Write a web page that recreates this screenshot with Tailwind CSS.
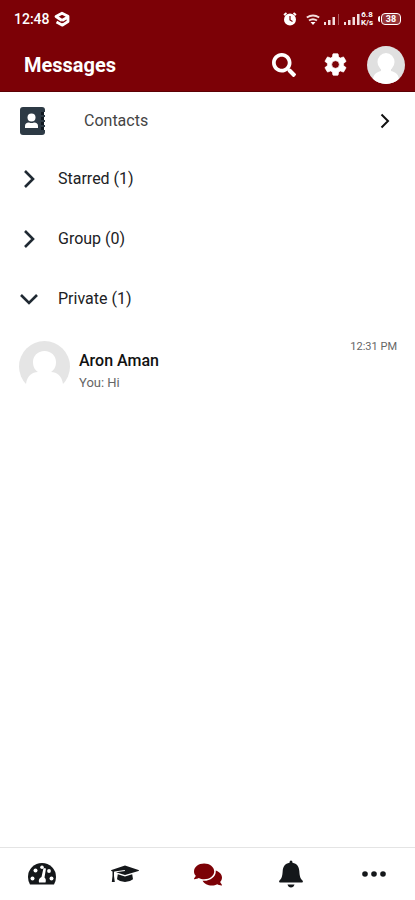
<!DOCTYPE html>
<html lang="en">
<head>
<meta charset="utf-8">
<meta name="viewport" content="width=device-width, initial-scale=1">
<title>Messages</title>
<script src="https://cdn.jsdelivr.net/npm/@tailwindcss/browser@4"></script>
</head>
<body class="flex min-h-screen flex-col bg-white font-[Roboto,sans-serif] text-[#202124]">
<header class="border-b border-[#5c0004] bg-[#7c0106] text-white">
  <div class="flex h-[38px] items-center justify-between pl-3.5 pr-3.5">
    <div class="flex items-center gap-1">
      <span class="text-sm font-medium">12:48</span>
      <svg class="size-4" viewBox="0 0 16 16" fill="none" stroke="currentColor" stroke-width="2.800" stroke-linejoin="round"><path d="M8 9.500 2 5.500 8 2.200l6 3v5.300l-5.500 3.700L2.500 11M8 9.500l5-3"/></svg>
    </div>
    <div class="flex items-center gap-1">
      <svg class="mr-1 size-4" viewBox="0 0 16 16"><circle cx="8" cy="8.500" r="6" fill="#fff"/><path d="M2 4 4.500 2M14 4 11.500 2" stroke="#fff" stroke-width="1.800"/><path d="M8 5v4l2.500 1.500" fill="none" stroke="#7c0106" stroke-width="1.200"/></svg>
      <svg class="h-4 w-3.5" viewBox="0 0 14 16" fill="none" stroke="#f3dddd" stroke-width="2"><path d="M.8 6.500Q7 2.500 13.200 6.500M3 9.500q4-2.700 8 0"/><path d="M4.500 11h5L7 14z" fill="#fff" stroke="none"/></svg>
      <svg class="h-4 w-4" viewBox="0 0 16 16" fill="#f3dddd"><path d="M0 11h2v3H0zM4 9h2.500v5H4zM8.500 6H11v8H8.500z"/><path d="M14 3h1v11h-1z" opacity=".4"/></svg>
      <svg class="h-4 w-4" viewBox="0 0 16 16" fill="#f3dddd"><path d="M0 11h2v3H0zM4 9h2.500v5H4zM8.500 6H11v8H8.500zM13 3h2.500v11H13z"/></svg>
      <span class="-ml-1 flex w-3.5 flex-col text-center text-[8px] font-bold leading-[8px]"><span>6.8</span><span>K/s</span></span>
      <span class="flex items-center"><span class="mr-px h-1.5 w-0.5 rounded-l bg-white"></span><span class="flex h-3 w-5 items-center justify-center rounded border border-white bg-white/20 text-[9px] font-bold leading-none">38</span></span>
    </div>
  </div>
  <div class="flex h-[53px] items-center pl-6 pr-2.5">
    <h1 class="flex-1 text-xl font-bold">Messages</h1>
    <button aria-label="Search" class="mr-[26px]"><svg class="size-6" viewBox="0 0 512 512" fill="currentColor"><path d="M505 442.700L405.300 343c-4.500-4.500-10.600-7-17-7H372c27.600-35.300 44-79.700 44-128C416 93.100 322.900 0 208 0S0 93.100 0 208s93.100 208 208 208c48.300 0 92.700-16.400 128-44v16.300c0 6.400 2.500 12.500 7 17l99.700 99.700c9.400 9.400 24.600 9.400 33.900 0l28.300-28.300c9.400-9.400 9.400-24.600.1-34zM208 336c-70.700 0-128-57.200-128-128 0-70.700 57.200-128 128-128 70.700 0 128 57.200 128 128 0 70.700-57.200 128-128 128z"/></svg></button>
    <button aria-label="Settings" class="mr-[18px]"><svg class="size-[27px]" viewBox="0 0 24 24" fill="currentColor" stroke="currentColor" stroke-width=".6"><path d="M19.140 12.940c.04-.3.060-.61.060-.94 0-.32-.02-.64-.07-.94l2.030-1.580c.18-.14.23-.41.12-.61l-1.920-3.320c-.12-.22-.37-.29-.59-.22l-2.390.96c-.5-.38-1.030-.7-1.620-.94l-.36-2.540c-.04-.24-.24-.41-.48-.41h-3.840c-.24 0-.43.17-.47.41l-.36 2.540c-.59.24-1.130.57-1.620.94l-2.390-.96c-.22-.08-.47 0-.59.22L2.740 8.870c-.12.21-.08.47.12.61l2.030 1.580c-.05.3-.09.63-.09.94s.02.64.07.94l-2.030 1.580c-.18.14-.23.41-.12.61l1.920 3.320c.12.22.37.29.59.22l2.390-.96c.5.38 1.030.7 1.620.94l.36 2.540c.05.24.24.41.48.41h3.840c.24 0 .44-.17.47-.41l.36-2.540c.59-.24 1.130-.56 1.620-.94l2.390.96c.22.08.47 0 .59-.22l1.920-3.320c.12-.22.07-.47-.12-.61l-2.010-1.580zM12 15.400a3.400 3.400 0 1 1 0-6.800 3.400 3.400 0 0 1 0 6.800z"/></svg></button>
    <button aria-label="Profile" class="size-[38px] overflow-hidden rounded-full bg-[#e0e0e0]"><svg class="size-full" viewBox="0 0 38 38" fill="#fff"><ellipse cx="19" cy="16" rx="8.500" ry="9"/><path d="M14 21h10v4c5 1 8 4 8 9a19 19 0 0 1-26 0c0-5 3-8 8-9z"/></svg></button>
  </div>
</header>
<main class="flex-1 pt-px">
  <a href="#contacts" class="flex h-14 items-center pl-5 pr-[25px]">
    <svg class="h-7 w-[26px]" viewBox="0 0 26 28"><path fill="#2d3a45" d="M3 0h19q3 0 3 3v22q0 3-3 3H3q-3 0-3-3V3Q0 0 3 0z"/><path fill="#fff" d="M26 5h-2v3h2zM26 10h-2v3h2zM26 15h-2v3h2zM26 20h-2v3h2z"/><path fill="#111a22" d="M21 5h3v3h-3zM21 10h3v3h-3zM21 15h3v3h-3zM21 20h3v3h-3z"/><circle cx="11.500" cy="10.500" r="4" fill="#fff"/><path fill="#fff" d="M5 21v-2q0-3.500 4-3.500 2.500 1.200 5 0 4 0 4 3.500v2z"/></svg>
    <span class="ml-[38px] flex-1 text-base text-[#444]">Contacts</span>
    <svg class="h-4 w-2.5" viewBox="0 0 10 16" fill="none" stroke="#111" stroke-width="2"><path d="m1.500 1.500 6.500 6.500-6.500 6.500"/></svg>
  </a>
  <button class="flex h-[60px] w-full items-center pl-5 text-left">
    <svg class="mr-5 size-[18px]" viewBox="0 0 18 18" fill="none" stroke="#202a33" stroke-width="2.600"><path d="m5 1 8 8-8 8"/></svg>
    <span>Starred (1)</span>
  </button>
  <button class="flex h-[60px] w-full items-center pl-5 text-left">
    <svg class="mr-5 size-[18px]" viewBox="0 0 18 18" fill="none" stroke="#202a33" stroke-width="2.600"><path d="m5 1 8 8-8 8"/></svg>
    <span>Group (0)</span>
  </button>
  <button aria-expanded="true" class="flex h-[60px] w-full items-center pl-5 text-left">
    <svg class="mr-5 size-[18px]" viewBox="0 0 18 18" fill="none" stroke="#202a33" stroke-width="2.600"><path d="m1 5 8 8 8-8"/></svg>
    <span>Private (1)</span>
  </button>
  <a href="#aron" class="flex pl-[19px] pr-[18px] pt-3">
    <svg class="h-[51px] w-[51px]" viewBox="0 0 51 51"><circle cx="25.500" cy="25.500" r="25.500" fill="#e5e5e5"/><path fill="#fff" d="M25.500 10c7 0 11.500 5 11.500 11 0 5-2 8-5 10 6 0 11 4 12 12v8H7v-8c1-8 6-12 12-12-3-2-5-5-5-10 0-6 4.500-11 11.500-11z"/></svg>
    <span class="ml-[9px] flex flex-1 flex-col gap-0.5 pt-2">
      <span class="text-base font-medium leading-6 text-[#111]">Aron Aman</span>
      <span class="text-[13px] leading-4 text-[#666]">You: Hi</span>
    </span>
    <time class="text-[11px] leading-3 text-[#666]">12:31 PM</time>
  </a>
</main>
<nav class="grid h-[53px] grid-cols-5 items-center justify-items-center border-t border-[#e4e4e4] text-[#14171a]">
  <a href="#dashboard" aria-label="Dashboard"><svg class="h-[22px] w-7" viewBox="0 0 28 22"><path fill="currentColor" d="M2 21.500Q0 18 0 14a14 14 0 0 1 28 0q0 4-2 7.500z"/><g fill="#fff"><circle cx="4.500" cy="15.500" r="2"/><circle cx="7.500" cy="7.500" r="2"/><circle cx="14" cy="4.300" r="1.800"/><circle cx="21" cy="8" r="1.900"/><circle cx="23.500" cy="15.500" r="2"/><path d="m15.500 5 2.500.6-1.500 9q2 1.500 1 5h-6.500q-1-4 2.500-5.500z"/></g></svg></a>
  <a href="#courses" aria-label="Courses"><svg class="h-[18px] w-7" viewBox="0 0 28 18" fill="currentColor"><path d="M14 .5 27.500 5q1 .5 0 1L14 10 5 7.300l9-1.300-.3-1L3.500 6.500 3 7v4l.8 6H.8l.7-6V6.500L.5 6q-1-.5 0-1z"/><path d="m6.800 9.300 7.200 2.200 7.200-2.200.8 5q-3 2.700-8 2.700t-8-2.700z"/></svg></a>
  <a href="#messages" aria-label="Messages" aria-current="page" class="text-[#7c0106]"><svg class="h-[25px] w-7" viewBox="0 0 576 512" fill="currentColor"><path d="M416 192c0-88.400-93.100-160-208-160S0 103.600 0 192c0 34.300 14.100 65.900 38 92-13.400 30.200-35.500 54.200-35.800 54.500-2.200 2.300-2.800 5.700-1.500 8.700S4.800 352 8 352c36.600 0 66.900-12.300 88.700-25 32.200 15.700 70.300 25 111.300 25 114.900 0 208-71.600 208-160zm122 220c23.900-26 38-57.700 38-92 0-66.900-53.500-124.200-129.300-148.100.9 6.600 1.300 13.300 1.300 20.100 0 105.900-107.700 192-240 192-10.800 0-21.300-.8-31.700-1.900C207.800 439.600 281.800 480 368 480c41 0 79.100-9.200 111.300-25 21.800 12.700 52.100 25 88.700 25 3.200 0 6.100-1.900 7.300-4.800 1.300-2.900.7-6.300-1.500-8.700-.3-.3-22.400-24.200-35.800-54.500z"/></svg></a>
  <a href="#notifications" aria-label="Notifications"><svg class="h-7 w-6" viewBox="0 0 24 28" fill="currentColor"><path d="M12 .5q1.500 0 1.500 2.300C18 3.500 20 7 20.300 11c.4 6 1.200 7.500 3.200 9.500.8 1 .3 2-.8 2H1.300c-1.100 0-1.600-1-.8-2 2-2 2.800-3.500 3.200-9.500C4 7 6 3.500 10.500 2.800Q10.500.5 12 .5zM8.500 24.500h7q-.8 3-3.500 3t-3.500-3z"/></svg></a>
  <a href="#more" aria-label="More"><svg class="h-1.5 w-6" viewBox="0 0 24 6" fill="currentColor"><circle cx="3" cy="3" r="2.800"/><circle cx="12" cy="3" r="2.800"/><circle cx="21" cy="3" r="2.800"/></svg></a>
</nav>
</body>
</html>
